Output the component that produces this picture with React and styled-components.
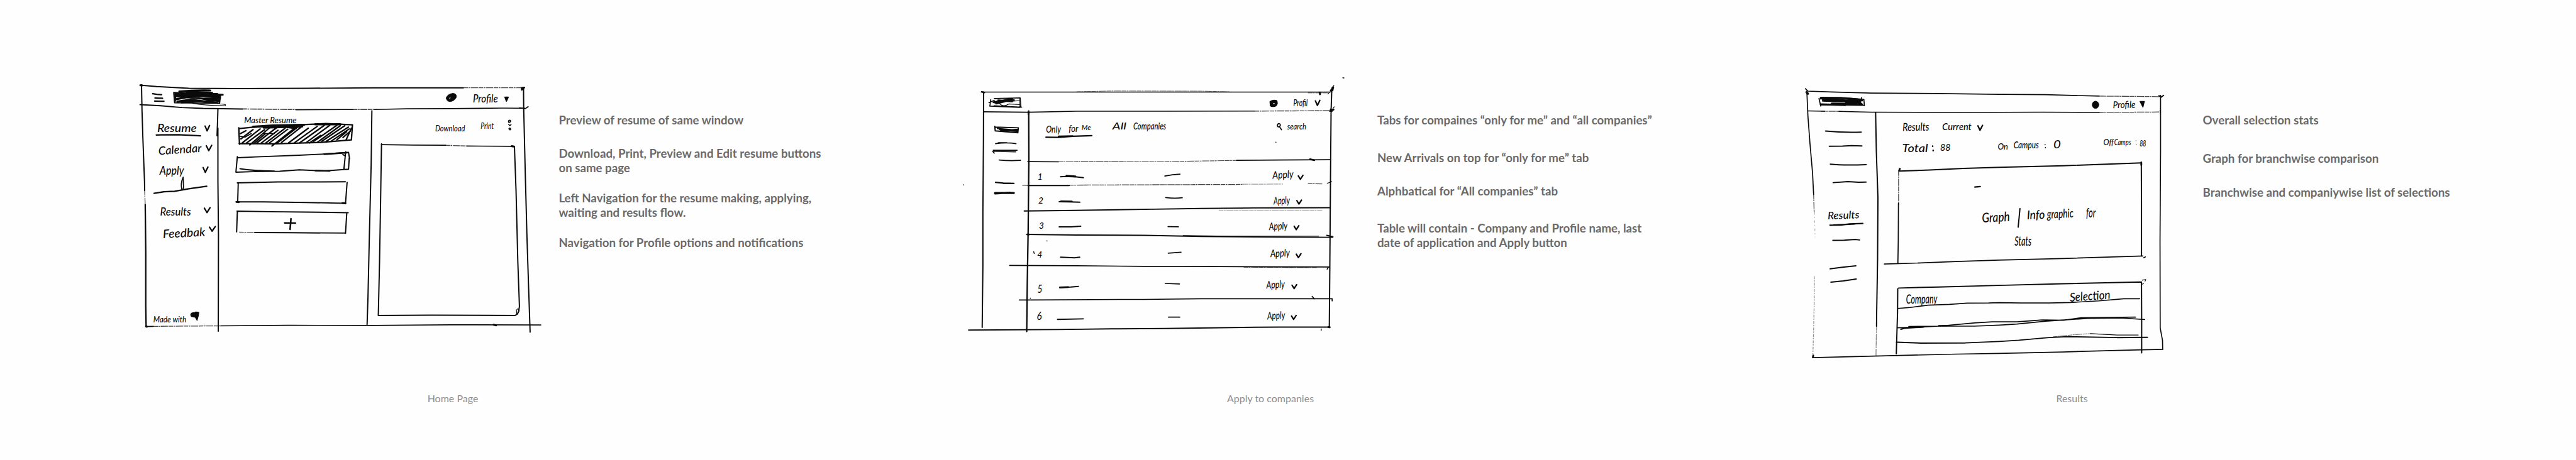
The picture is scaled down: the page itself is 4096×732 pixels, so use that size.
import React from "react";
import styled, { createGlobalStyle } from "styled-components";

const GlobalStyle = createGlobalStyle`
  * { box-sizing: border-box; }
  body { margin: 0; background: #fefefe; }
`;

const Page = styled.main`
  display: flex;
  width: 4096px;
  height: 732px;
  overflow: hidden;
  background: #fefefe;
  font-family: Lato, "Liberation Sans", sans-serif;
`;

const Panel = styled.section`
  flex: none;
  width: ${(p) => p.$width}px;
  height: 732px;
  display: flex;
  flex-direction: column;
`;

const Board = styled.div`
  display: flex;
  align-items: flex-start;
  height: 623.5px;
  padding-left: ${(p) => p.$indent}px;
`;

const Sketch = styled.svg`
  flex: none;
  display: block;
  width: ${(p) => p.$width}px;
  height: ${(p) => p.$height}px;
  margin-top: ${(p) => p.$top}px;
  fill: none;
  stroke: #0a0a0a;
  stroke-width: 7;
  stroke-linecap: round;
  stroke-linejoin: round;
`;

const Handwriting = styled.text`
  font-family: Lato, "Liberation Sans", sans-serif;
  font-style: italic;
  font-weight: 500;
  font-size: ${(p) => p.$size}px;
  fill: #0a0a0a;
  stroke: none;
`;

const Notes = styled.div`
  flex: none;
  margin: 179.8px 0 0 ${(p) => p.$gap}px;
  color: #6a6a6a;
  font-size: 18.7px;
  font-weight: 700;
  line-height: 23.1px;
  white-space: nowrap;
`;

const Note = styled.p`
  margin: 0 0 ${(p) => p.$after || 0}px;
`;

const Caption = styled.div`
  width: ${(p) => p.$width}px;
  text-align: center;
  color: #8e8e8e;
  font-size: 16px;
  line-height: 20px;
`;

const Word = ({ x, y, w, size = 58, tilt = 0, children }) => (
  <Handwriting
    $size={size}
    x={x}
    y={y}
    textLength={w}
    lengthAdjust="spacingAndGlyphs"
    transform={tilt ? `rotate(${tilt} ${x} ${y})` : undefined}
  >
    {children}
  </Handwriting>
);

const Chevron = ({ x, y, w = 25, h = 28 }) => (
  <path d={`M${x} ${y + 3} L${x + w * 0.45} ${y + h} L${x + w} ${y}`} strokeWidth="8" />
);

const Faded = (props) => <path strokeWidth="4.5" strokeDasharray="26 3 9 4 40 3" opacity="0.75" strokeLinecap="butt" {...props} />;

const HomeSketch = () => (
  <Sketch $width={680} $height={425} $top={119} viewBox="0 0 2400 1500">
    <path d="M66 58 L160 66 L340 76 L620 78 L1000 76 L1380 73 L1880 73" />
    <Faded d="M1880 73 L2225 73" />
    <path d="M74 56 L77 200 L82 360 L91 600 L92 650" />
    <Faded d="M92 650 L95 740" />
    <path d="M95 730 L98 1000 L98 1300 L100 1415" strokeWidth="8" />
    <path d="M66 168 L180 174 L300 184 L420 189 L640 192" />
    <Faded d="M640 192 L940 195 M1260 195 L1380 194" strokeWidth="6" />
    <path d="M940 196 L1260 195 M1380 195 L1560 191 L1800 190 L2100 187 L2225 188" strokeWidth="6" />
    <path d="M2195 186 L2228 190 L2244 179" strokeWidth="6" />
    <path d="M2207 74 L2222 72 M2208 84 L2220 72" strokeWidth="10" />
    <path d="M503 192 L501 260 L498 342 M503 300 L503 600 L506 900 L505 1440" />
    <path d="M1367 202 L1363 500 L1353 900 L1345 1250 L1340 1405" />
    <path d="M2218 72 L2219 190 L2228 560 L2237 900 L2246 1180 L2255 1445" />
    <path d="M100 1414 L140 1413 M520 1410 L900 1407 L1380 1408 L1800 1404 L2315 1405" strokeWidth="6" />
    <Faded d="M140 1413 L520 1410" />
    <path d="M2050 1404 L2064 1407" strokeWidth="11" />
    <path d="M68 59 L78 60 M100 1412 L104 1415" strokeWidth="11" />

    {/* menu and logo */}
    <path d="M137 106 L160 110 L187 112 M150 130 L192 132 M148 148 L200 149" strokeWidth="8" />
    <path d="M255 100 L518 112 L512 160 L260 157 Z" />
    <path d="M286 94 Q370 86 460 88 M270 104 L530 112 M262 112 L510 124 M268 122 L514 118 M292 106 L500 108 M330 98 L470 101 M264 138 L330 126 L420 134 L515 130 M275 150 L350 140 L430 150 L510 140 M300 155 L400 146 L500 158 M370 128 L510 148 M262 148 L264 104" strokeWidth="11" />
    <path d="M360 160 Q460 176 545 173 Q552 164 515 164" strokeWidth="4" />

    {/* side navigation */}
    <Word x={162} y={322} w={222} size={62}>Resume</Word>
    <path d="M157 338 L280 337 L405 343" strokeWidth="8" />
    <Chevron x={431} y={285} h={30} />
    <Word x={170} y={450} w={243} size={64} tilt={-4}>Calendar</Word>
    <Chevron x={438} y={396} w={30} h={30} />
    <Word x={176} y={561} w={136} size={70}>Apply</Word>
    <path d="M308 575 Q292 610 300 643 Q313 650 309 610 Z" strokeWidth="6" />
    <Chevron x={420} y={518} w={27} h={30} />
    <path d="M145 666 L200 657 L260 654 L340 640 L440 626" strokeWidth="8" />
    <Word x={178} y={790} w={174} size={62}>Results</Word>
    <Chevron x={427} y={746} w={32} h={28} />
    <Word x={195} y={918} w={238} size={66} tilt={-3}>Feedbak</Word>
    <Chevron x={456} y={853} w={32} h={25} />
    <Word x={140} y={1390} w={186} size={50}>Made with</Word>
    <path d="M350 1348 Q352 1334 370 1336 L380 1332 L396 1334 L394 1350 L386 1380 L376 1362 L354 1358 Z" fill="#0a0a0a" strokeWidth="4" />

    {/* resume list */}
    <Word x={650} y={271} w={294} size={48}>Master Resume</Word>
    <path d="M620 298 L624 390 M622 302 L700 294 L900 284 L1110 274 L1258 281 L1252 366 L1080 380 L820 388 L622 386" strokeWidth="8" />
    <path d="M700 292 L810 285 L985 282 M760 296 L975 290 M840 286 L940 300 M1050 278 L1190 278" strokeWidth="13" />
    <path
      d="M630 330 L660 314 M632 360 L700 308 M640 382 L740 304 M662 384 L765 308 M682 394 L790 300 M704 386 L770 330 M722 382 L830 298 M745 384 L840 312 M770 384 L880 300 M790 384 L895 306 M806 400 L930 302 M834 384 L950 294 M860 380 L975 290 M900 382 L1010 300 M935 380 L1060 290 M962 382 L1100 284 M1000 380 L1130 284 M1018 382 L1080 340 M1040 374 L1170 284 M1060 380 L1190 286 M1085 374 L1215 286 M1110 374 L1235 294 M1140 372 L1240 304 M1170 366 L1225 320 M1222 366 L1252 300 M1205 352 L1245 318"
      strokeWidth="8"
    />
    <path d="M625 345 L655 350 L690 330 M800 322 L830 300 M760 330 L820 330" strokeWidth="6" />
    <path d="M612 460 L604 546 M606 547 L700 544 L850 542 L960 534 L1100 540 L1236 530 L1240 468 M627 528 Q700 540 820 541 M612 466 L720 461 L960 452 L1080 446 L1236 436 L1242 472 M1220 432 L1210 530 M1204 448 L1218 456" />
    <path d="M1100 446 L1225 438 M1050 538 L1130 540" strokeWidth="9" />
    <path d="M617 606 L614 714 M612 607 L840 602 L1218 601 M1228 604 L1219 722 M604 714 L760 714 L1000 717 L1220 722" />
    <path d="M608 714 L620 715 M1202 721 L1218 722" strokeWidth="11" />
    <path d="M612 768 L608 882 M610 766 L800 769 L1000 771 L1234 775 M1226 778 L1219 890 M710 886 L900 887 L1219 889" />
    <Faded d="M622 884 L715 886" />
    <path d="M878 832 L938 833 M913 808 L908 868" strokeWidth="9" />

    {/* header right and preview */}
    <path d="M1784 130 Q1790 108 1822 104 Q1844 106 1841 126 Q1830 148 1806 151 Q1786 150 1784 130 Z" fill="#0a0a0a" strokeWidth="3" />
    <path d="M1806 126 L1804 136" stroke="#ffffff" strokeWidth="4" />
    <Word x={1934} y={155} w={140} size={62}>Profile</Word>
    <path d="M2114 126 L2132 126 L2122 148 Z" fill="#0a0a0a" />
    <Word x={1722} y={319} w={168} size={46}>Download</Word>
    <Word x={1977} y={305} w={74} size={50}>Print</Word>
    <path d="M2134 258 Q2142 252 2146 260 Q2142 270 2134 266 Z M2135 278 Q2140 290 2148 280 M2136 302 Q2144 296 2146 306 Q2140 314 2136 302 Z" strokeWidth="6" />
    <path d="M1421 388 L1416 700 L1410 1050 L1403 1352 L1700 1350 L2170 1352 Q2192 1345 2195 1300 L2186 1050 L2176 650 L2167 402" />
    <path d="M1421 392 L1600 395 L1780 396 M1900 400 L2165 402" strokeWidth="6" />
    <Faded d="M1780 396 L1900 400" strokeWidth="5" />
    <path d="M2152 401 L2165 403" strokeWidth="11" />
    <path d="M2180 1346 L2178 1322 Q2190 1305 2194 1325 L2184 1346" strokeWidth="4" />
  </Sketch>
);

const applyRows = [
  { x: 1802, y: 612, w: 118, cx: 1946, cy: 593 },
  { x: 1808, y: 757, w: 92, cx: 1938, cy: 732 },
  { x: 1782, y: 901, w: 104, cx: 1923, cy: 876 },
  { x: 1790, y: 1053, w: 110, cx: 1935, cy: 1033 },
  { x: 1767, y: 1229, w: 104, cx: 1911, cy: 1207 },
  { x: 1773, y: 1403, w: 100, cx: 1908, cy: 1380 },
];

const rowNumbers = [
  [483, 619, "1"],
  [487, 752, "2"],
  [491, 893, "3"],
  [481, 1056, "4"],
  [482, 1254, "5"],
  [478, 1406, "6"],
];

const ApplySketch = () => (
  <Sketch $width={646} $height={425} $top={110.5} viewBox="0 0 2280 1500">
    <path d="M166 125 L1200 125 L2125 125" strokeWidth="5" />
    <Faded d="M700 124 L900 119 L1400 120 L1560 124 M2000 130 L2110 130" strokeWidth="3" />
    <path d="M180 126 L179 400 L176 800 L176 1100 L172 1447" />
    <path d="M170 124 L184 128" strokeWidth="9" />
    <path d="M180 236 L430 239 L700 233 L1200 233 L1700 232" strokeWidth="6" />
    <Faded d="M1700 232 L2130 230" strokeWidth="5" />
    <path d="M433 232 L434 500 L430 900 L425 1200 L422 1470" strokeWidth="8" />
    <path d="M432 236 L432 250" strokeWidth="10" />
    <path d="M2134 110 L2130 230 L2126 700 L2123 1100 L2120 1448" />
    <path d="M2128 118 L2142 98 L2138 116 M2124 232 L2144 224 M2066 128 L2068 138 M2128 222 L2134 232" strokeWidth="10" />
    <path d="M2134 102 L2146 88 M2138 222 L2148 208 M2112 136 L2124 124" strokeWidth="4" />
    <path d="M2196 45 L2202 46 M67 646 L68 647 M535 961 L536 962 M461 1022 L464 1032 M1820 407 L1821 407 M2075 1456 L2074 1464 M442 1284 L443 1283" strokeWidth="5" />

    <path d="M96 1462 L600 1459 L900 1455 L1200 1453 L1700 1446 L2120 1445" />
    <path d="M2116 1445 L2122 1446" strokeWidth="11" />
    <path d="M428 516 L600 517 M1600 509 L2125 505" strokeWidth="6" />
    <Faded d="M600 517 L1200 516 L1600 509" strokeWidth="4" />
    <path d="M2012 502 L2036 508" strokeWidth="9" />
    <path d="M398 649 L430 650" strokeWidth="3" />
    <path d="M430 650 L660 650" />
    <Faded d="M660 648 L1100 646 L1640 644 M2000 640 L2080 641" />
    <Faded d="M1640 643 L1860 642" opacity="0.4" />
    <path d="M2108 638 L2134 628" strokeWidth="4" />
    <path d="M408 793 L700 790 L1080 784 L1400 779 L1700 776 L2123 775" />
    <Faded d="M1500 789 L2080 789" strokeWidth="3" opacity="0.5" />
    <path d="M422 925 L700 928 L1080 930 L1400 936 L1700 939 L2140 941 M2106 930 L2140 938" />
    <path d="M1300 931 L1560 935 L2060 935" strokeWidth="4" />
    <path d="M424 925 L436 925" strokeWidth="10" />
    <path d="M326 1099 L700 1101 L1080 1104 L1300 1104 L1640 1106 L2121 1108 M2108 1120 L2114 1110" strokeWidth="6" />
    <Faded d="M1640 1109 L2050 1111" strokeWidth="4" />
    <path d="M380 1293 L430 1293 L620 1292 L940 1290 L1080 1290 L1400 1286 L2136 1286 L2136 1298 M2024 1273 L2036 1287" strokeWidth="6" />

    {/* logo and side navigation */}
    <path d="M210 184 L240 172 M220 168 L215 204 L385 211 L384 158 L240 162 M240 202 L394 210" strokeWidth="6" />
    <path d="M235 182 L340 164 M240 184 L350 170 M262 172 L340 178 M250 190 L300 178" strokeWidth="10" />
    <path d="M268 188 Q290 212 322 192 L380 196 M345 176 L380 174 M386 158 L390 206" strokeWidth="4" />
    <path d="M243 318 L245 343 L372 354 L375 326 L246 322 M258 330 L370 340 M270 336 L366 346 M276 342 L372 334" strokeWidth="7" />
    <path d="M247 415 Q310 406 362 415 M262 410 L310 410 M234 452 L368 452 M230 458 L360 461 M234 462 L240 468 M267 507 Q320 512 387 509" strokeWidth="6" />
    <path d="M247 632 L290 637 L350 638 M290 638 L320 638" strokeWidth="8" />
    <path d="M244 695 L328 690 M244 692 L350 692" strokeWidth="11" />

    {/* tabs */}
    <Word x={530} y={352} w={84} size={54}>Only</Word>
    <Word x={657} y={350} w={54} size={56}>for</Word>
    <Word x={730} y={340} w={52} size={42}>Me</Word>
    <path d="M530 379 L600 380 L680 374 L787 370 M600 374 L680 372" strokeWidth="8" />
    <Word x={903} y={335} w={78} size={54}>All</Word>
    <Word x={1020} y={337} w={184} size={56}>Companies</Word>
    <path d="M1832 304 Q1822 318 1838 322 Q1850 312 1842 304 Q1836 300 1832 306 M1842 322 L1852 337" strokeWidth="6" />
    <Word x={1884} y={334} w={106} size={48}>search</Word>

    {/* header right */}
    <path d="M1788 180 Q1800 168 1824 174 Q1832 190 1820 202 Q1800 210 1790 202 Z" fill="#0a0a0a" />
    <path d="M1806 190 L1812 190" stroke="#ffffff" strokeWidth="4" />
    <Word x={1918} y={203} w={80} size={52}>Profil</Word>
    <Chevron x={2042} y={172} w={25} h={28} />

    {rowNumbers.map(([x, y, n]) => (
      <Word key={n} x={x} y={y} w={28} size={n === "6" ? 64 : n === "5" ? 58 : 44}>{n}</Word>
    ))}
    <path d="M612 601 L640 599 L700 602 L740 606 M604 741 L660 742 L720 744 M604 882 L670 882 L725 879 M612 1053 L690 1056 L719 1053 M608 1222 L670 1220 L712 1217 M595 1402 L740 1399" strokeWidth="7" />
    <path d="M645 595 L695 599 M615 739 L675 740 M608 1223 L655 1221" strokeWidth="10" />
    <path d="M1197 597 L1240 590 L1282 586 M1202 718 Q1250 724 1295 719 M1215 881 L1273 882 M1216 1030 L1288 1025 M1199 1200 L1279 1203 M1217 1389 L1281 1389" strokeWidth="6" />
    {applyRows.map((r) => (
      <g key={r.y}>
        <Word x={r.x} y={r.y} w={r.w} size={58} tilt={-3}>Apply</Word>
        <Chevron x={r.cx} y={r.cy} w={26} h={22} />
      </g>
    ))}
  </Sketch>
);

const ResultsSketch = () => (
  <Sketch $width={595} $height={442} $top={127.5} viewBox="0 0 2100 1560">
    <path d="M52 46 L66 60 L200 65 L420 71 L800 74 L1140 78 L1400 80 L1700 88" strokeWidth="6" />
    <Faded d="M1700 88 L2040 91" />
    <path d="M58 66 L66 74" strokeWidth="12" />
    <path d="M60 60 L66 200 L78 360 L92 520 L98 640" strokeWidth="6" />
    <Faded d="M98 640 L101 740" />
    <Faded d="M103 740 L106 880" strokeWidth="3" opacity="0.4" strokeDasharray="14 12 6 14" />
    <Faded d="M102 1100 L101 1260 L98 1400 L94 1540" opacity="0.45" strokeDasharray="16 5 8 7" />
    <path d="M96 1545 L94 1556" strokeWidth="10" />
    <path d="M68 171 L160 173 M240 174 L420 178 L800 180 L1140 179 L1380 178 L1700 180" strokeWidth="5" />
    <Faded d="M140 173 L260 174 M1700 180 L2045 177" />
    <path d="M446 180 L450 400 L459 660 L457 1000 L452 1300 L451 1380" />
    <Faded d="M451 1380 L448 1546" opacity="0.5" />
    <path d="M2045 84 L2045 400 L2042 900 L2043 1390 L2056 1460 L2057 1510" strokeWidth="6" />
    <path d="M2036 86 L2048 94 L2062 84 M2043 170 L2044 178" strokeWidth="7" />
    <path d="M94 1557 L440 1548 L900 1537 L1140 1533 L1500 1525 L1800 1516 L2058 1510" strokeWidth="6" />

    {/* logo and side navigation */}
    <path d="M128 102 L138 144 M134 104 L300 100 L380 106 L383 142 M368 96 L356 126 M136 136 L380 140" strokeWidth="6" />
    <path d="M138 97 L250 98 L340 106 L370 112 M150 106 L360 116 M138 134 L275 138 M280 126 L366 132 M150 114 L360 122 M200 130 L370 134" strokeWidth="11" />
    <path d="M165 284 Q270 294 365 290 M186 370 L260 369 L310 366 L369 368 M192 470 Q260 478 393 473 M208 574 L290 568 L350 572 L392 571 M206 898 L270 897 L330 893 L356 896 M191 1058 L260 1049 L335 1041 M195 1133 L265 1126 L337 1115" />
    <Word x={177} y={780} w={178} size={58} tilt={-2}>Results</Word>
    <path d="M190 813 L250 812 L300 806 L374 803 M210 812 L330 806" strokeWidth="8" />

    {/* selection totals */}
    <Word x={597} y={284} w={150} size={62} tilt={-1}>Results</Word>
    <Word x={820} y={278} w={164} size={52}>Current</Word>
    <Chevron x={1020} y={252} w={26} h={28} />
    <Word x={595} y={404} w={145} size={60}>Total</Word>
    <path d="M766 369 L766 370 M769 393 L769 394" strokeWidth="9" />
    <Word x={808} y={397} w={58} size={52}>88</Word>
    <Word x={1131} y={388} w={58} size={48}>On</Word>
    <Word x={1220} y={382} w={142} size={52}>Campus</Word>
    <path d="M1397 360 L1397 361 M1399 377 L1399 378" strokeWidth="6" />
    <Word x={1444} y={382} w={42} size={62}>0</Word>
    <Word x={1724} y={363} w={58} size={50}>Off</Word>
    <Word x={1785} y={365} w={94} size={48}>Camps</Word>
    <path d="M1907 338 L1907 339 M1908 358 L1908 359" strokeWidth="4" />
    <Word x={1928} y={370} w={36} size={46}>88</Word>

    {/* header right */}
    <ellipse cx="1680" cy="137" rx="19" ry="21" fill="#0a0a0a" strokeWidth="2" />
    <Word x={1778} y={156} w={126} size={54} tilt={-1}>Profile</Word>
    <path d="M1930 118 L1954 118 L1946 150 Z" fill="#0a0a0a" strokeWidth="5" />

    {/* chart area */}
    <path d="M577 509 L750 503 L940 494 L1140 488 L1500 479 L1935 463" />
    <path d="M578 506 L582 496 M1937 460 L1937 475" strokeWidth="10" />
    <Faded d="M575 510 L575 700" strokeWidth="5" />
    <path d="M574 690 L573 900 L571 1025" strokeWidth="6" />
    <path d="M1937 470 L1938 700 L1938 986" />
    <path d="M495 1031 L640 1027 L900 1017 L1140 1009 L1500 1000 L1946 986 M1950 996 L1960 991" strokeWidth="6" />
    <path d="M1003 599 L1033 596" strokeWidth="8" />
    <Word x={1044} y={798} w={156} size={74} tilt={-3}>Graph</Word>
    <path d="M1256 720 L1246 824" />
    <Word x={1296} y={780} w={100} size={68} tilt={-2}>Info</Word>
    <Word x={1408} y={776} w={150} size={68} tilt={-3}>graphic</Word>
    <Word x={1627} y={768} w={54} size={76}>for</Word>
    <Word x={1226} y={929} w={94} size={72}>Stats</Word>

    {/* selections table */}
    <path d="M575 1166 L800 1160 L1140 1151 L1500 1142 L1935 1132 M570 1170 L569 1300 L562 1535 M1938 1132 L1939 1350 L1939 1530" />
    <path d="M1942 1122 L1962 1118 L1958 1128 M1942 1144 L1950 1140" strokeWidth="4" />
    <path d="M570 1281 L640 1275 L740 1262 L860 1258 L960 1251 L1080 1250 L1140 1248 L1260 1250 L1420 1250 L1540 1247 L1700 1238 L1840 1226 L1928 1226" strokeWidth="6" />
    <path d="M568 1389 L720 1384 L800 1380 L1000 1362 L1100 1356 L1240 1356 L1380 1345 L1500 1347 L1600 1333 L1905 1329 M632 1382 L800 1380 L1000 1380 L1140 1374 L1240 1368 L1400 1352 L1640 1336 L1820 1334 L1956 1343" strokeWidth="6" />
    <path d="M588 1397 L610 1391 L715 1385 M800 1378 L850 1377" strokeWidth="8" />
    <path d="M563 1470 L700 1475 L950 1474 L1140 1466 L1250 1459 L1420 1444 L1520 1439 L1800 1444 L1972 1443" />
    <Faded d="M1440 1440 L1560 1428 L1650 1422" strokeWidth="3" />
    <path d="M1650 1422 L1800 1430 L1920 1430" strokeWidth="4" />
    <Word x={617} y={1254} w={176} size={72} tilt={-1}>Company</Word>
    <Word x={1537} y={1242} w={228} size={68} tilt={-4}>Selection</Word>
  </Sketch>
);

export default function App() {
  return (
    <>
      <GlobalStyle />
      <Page>
        <Panel $width={1487.5}>
          <Board $indent={204}>
            <HomeSketch />
            <Notes $gap={4.4}>
              <Note $after={29.9}>Preview of resume of same window</Note>
              <Note $after={25.1}>Download, Print, Preview and Edit resume buttons<br />on same page</Note>
              <Note $after={25.1}>Left Navigation for the resume making, applying,<br />waiting and results flow.</Note>
              <Note>Navigation for Profile options and notifications</Note>
            </Notes>
          </Board>
          <Caption $width={1440}>Home Page</Caption>
        </Panel>
        <Panel $width={1334.5}>
          <Board $indent={25.5}>
            <ApplySketch />
            <Notes $gap={31}>
              <Note $after={36.7}>Tabs for compaines “only for me” and “all companies”</Note>
              <Note $after={30.4}>New Arrivals on top for “only for me” tab</Note>
              <Note $after={36.2}>Alphbatical for “All companies” tab</Note>
              <Note>Table will contain - Company and Profile name, last<br />date of application and Apply button</Note>
            </Notes>
          </Board>
          <Caption $width={1065}>Apply to companies</Caption>
        </Panel>
        <Panel $width={1274}>
          <Board $indent={34}>
            <ResultsSketch />
            <Notes $gap={51.5}>
              <Note $after={38.1}>Overall selection stats</Note>
              <Note $after={30.7}>Graph for branchwise comparison</Note>
              <Note>Branchwise and companiywise list of selections</Note>
            </Notes>
          </Board>
          <Caption $width={945}>Results</Caption>
        </Panel>
      </Page>
    </>
  );
}
